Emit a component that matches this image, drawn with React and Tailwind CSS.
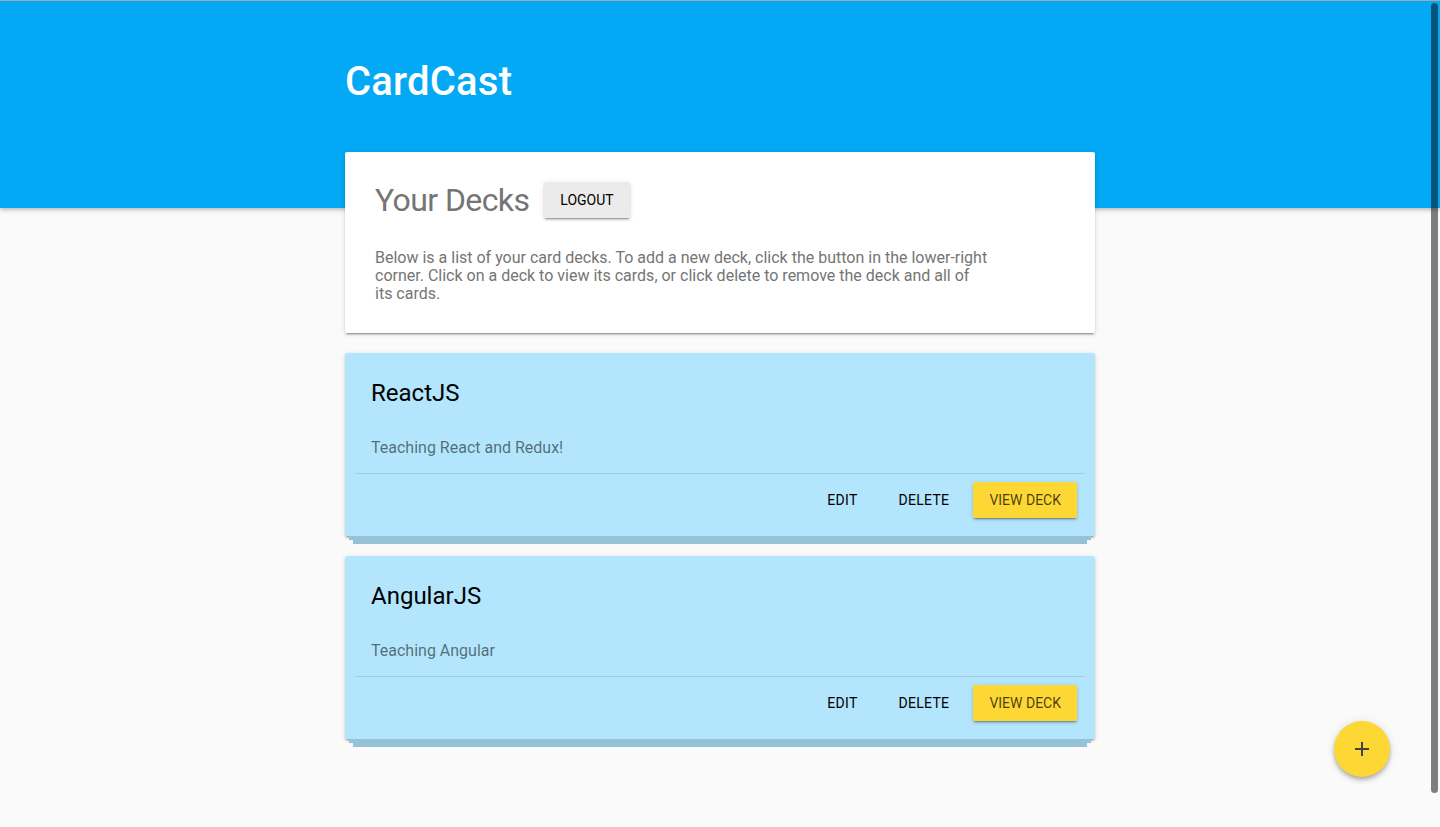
import React from "react";

const font = { fontFamily: "Roboto, 'Helvetica Neue', Arial, sans-serif" };

function DeckCard({ title, description }) {
  return (
    <div className="mb-[12px]">
      <div className="rounded-[2px] bg-[#b3e5fc] p-[10px] shadow-[0_2px_2px_0_rgba(0,0,0,0.14),0_3px_1px_-2px_rgba(0,0,0,0.2),0_1px_5px_0_rgba(0,0,0,0.12)]">
        <div className="p-4">
          <h2 className="text-[24px] font-normal leading-[normal] text-black">{title}</h2>
        </div>
        <p className="p-4 text-[16px] leading-[18px] text-[rgba(0,0,0,0.54)]">{description}</p>
        <div className="flex items-center justify-end gap-2 border-t border-[rgba(0,0,0,0.1)] p-2">
          <button className="h-9 min-w-[64px] px-4 text-[14px] font-normal uppercase leading-9 tracking-[0.3px] text-black">
            Edit
          </button>
          <button className="h-9 min-w-[64px] px-4 text-[14px] font-normal uppercase leading-9 tracking-[0.3px] text-black">
            Delete
          </button>
          <button className="h-9 min-w-[64px] rounded-[2px] bg-[#fdd835] px-4 text-[14px] font-normal uppercase leading-9 text-[rgba(0,0,0,0.72)] shadow-[0_2px_2px_0_rgba(0,0,0,0.14),0_3px_1px_-2px_rgba(0,0,0,0.2),0_1px_5px_0_rgba(0,0,0,0.12)]">
            View Deck
          </button>
        </div>
      </div>
      <div className="mx-1 h-1 bg-[#95c2d7]" />
      <div className="mx-2 h-1 bg-[#95c2d7]" />
    </div>
  );
}

export default function App() {
  return (
    <div className="relative min-h-screen overflow-hidden bg-[#fafafa]" style={font}>
      <header className="h-[208px] border-t border-[#a8a8a8] bg-[#03a9f4] shadow-[0_2px_4px_rgba(0,0,0,0.25)]">
        <div className="mx-auto w-[750px] pt-[57px]">
          <h1 className="text-[40px] font-medium leading-[normal] tracking-[0.2px] text-white">CardCast</h1>
        </div>
      </header>

      <main className="relative z-10 mx-auto -mt-[56px] w-[750px]">
        <section className="mb-5 rounded-[2px] bg-white px-[30px] pb-[30px] pt-[29px] shadow-[0_2px_2px_0_rgba(0,0,0,0.14),0_3px_1px_-2px_rgba(0,0,0,0.2),0_1px_5px_0_rgba(0,0,0,0.12)]">
          <div className="flex items-center gap-[15px]">
            <h2 className="text-[32px] font-normal leading-[normal] tracking-[-0.6px] text-[#757575]">Your Decks</h2>
            <button className="h-9 rounded-[2px] bg-[#ebebeb] px-4 text-[14px] font-normal uppercase leading-9 text-black shadow-[0_2px_2px_0_rgba(0,0,0,0.14),0_3px_1px_-2px_rgba(0,0,0,0.2),0_1px_5px_0_rgba(0,0,0,0.12)]">
              Logout
            </button>
          </div>
          <p className="mt-[30px] w-[614px] text-[16px] leading-[18px] text-[#757575]">
            Below is a list of your card decks. To add a new deck, click the button in the lower-right corner. Click on a deck to view its cards, or click delete to remove the deck and all of its cards.
          </p>
        </section>

        <DeckCard title="ReactJS" description="Teaching React and Redux!" />
        <DeckCard title="AngularJS" description="Teaching Angular" />
      </main>

      <button
        aria-label="Add deck"
        className="fixed bottom-[50px] right-[50px] z-20 flex h-14 w-14 items-center justify-center rounded-full bg-[#fdd835] shadow-[0_4px_5px_0_rgba(0,0,0,0.14),0_1px_10px_0_rgba(0,0,0,0.12),0_2px_4px_-1px_rgba(0,0,0,0.2)]"
      >
        <svg width="14" height="14" viewBox="0 0 14 14">
          <path d="M7 0v14M0 7h14" stroke="#424242" strokeWidth="2" fill="none" />
        </svg>
      </button>

      <div aria-hidden="true" className="fixed right-[2px] top-[3px] z-30 h-[790px] w-[7px] rounded-full bg-[rgba(0,0,0,0.5)]" />
    </div>
  );
}
